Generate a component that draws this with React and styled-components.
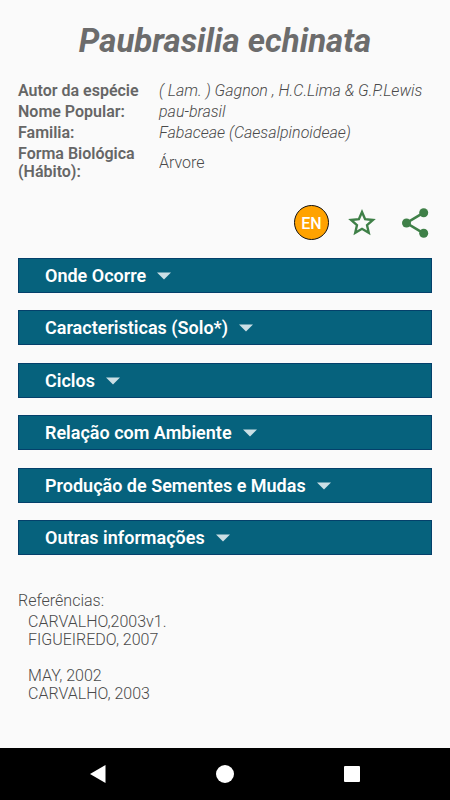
import React, { useState } from 'react';
import styled, { createGlobalStyle } from 'styled-components';

const GlobalStyle = createGlobalStyle`
  * {
    box-sizing: border-box;
  }
  body {
    margin: 0;
    background-color: #fafafa;
    color: #4a4a4a;
    font-family: Roboto, sans-serif;
    font-size: 16px;
    font-weight: 300;
    line-height: 18px;
  }
  button {
    padding: 0;
    border: none;
    background: none;
    font: inherit;
    cursor: pointer;
  }
`;

const Screen = styled.div`
  min-height: 100vh;
  display: flex;
  flex-direction: column;
`;

const Content = styled.main`
  flex: 1;
  padding: 21px 18px;
`;

const Title = styled.h1`
  margin: 0 0 18px;
  color: #6c6c6c;
  font-size: 33px;
  line-height: 40px;
  font-weight: 700;
  font-style: italic;
  text-align: center;
`;

const SpeciesTable = styled.table`
  width: 100%;
  border-collapse: collapse;
  th,
  td {
    padding: 3px 0 0;
    text-align: left;
    vertical-align: middle;
  }
  th {
    width: 141px;
    padding-right: 16px;
    color: #666666;
    font-weight: 600;
  }
`;

const SpeciesValue = styled.td`
  font-style: ${(props) => props.$italic ? 'italic' : 'normal'};
`;

const Actions = styled.div`
  display: flex;
  align-items: center;
  justify-content: flex-end;
  gap: 16px;
  margin: 24px 0 18px;
`;

const LanguageButton = styled.button`
  width: 35px;
  height: 35px;
  && {
    padding-top: 2px;
    border: 1px solid #111111;
    background-color: #ffa200;
    border-radius: 50%;
    color: white;
    font-weight: 500;
  }
`;

const IconButton = styled.button`
  width: 34px;
  height: 34px;
  & + & {
    margin-left: 3px;
  }
  svg {
    display: block;
    stroke: #3f8048;
  }
`;

const Sections = styled.div`
  min-height: 297px;
  display: flex;
  flex-direction: column;
  justify-content: space-between;
`;

const SectionButton = styled.button`
  width: 100%;
  height: 35px;
  display: flex;
  align-items: center;
  gap: 11px;
  && {
    padding: 1px 26px 0;
    border: 1px solid #04406b;
    background-color: #06627d;
    color: white;
    font-size: 18px;
    font-weight: 600;
  }
`;

const Caret = styled.svg`
  width: 14px;
  height: 8px;
  fill: #cbdfe5;
  transform: rotate(${(props) => props.$open ? '180deg' : '0'});
`;

const References = styled.section`
  margin-top: 37px;
  h2 {
    margin: 0 0 3px;
    font-size: 16px;
    font-weight: 300;
  }
  p {
    margin: 0 0 18px 10px;
  }
`;

const NavBar = styled.nav`
  height: 52px;
  padding: 0 35px;
  display: grid;
  grid-template-columns: repeat(3, 1fr);
  align-items: center;
  justify-items: center;
  background-color: black;
`;

const NavButton = styled.button`
  width: 18px;
  height: 18px;
  svg {
    display: block;
    fill: white;
  }
`;

const species = [
  { label: 'Autor da espécie', value: '( Lam. ) Gagnon , H.C.Lima & G.P.Lewis', italic: true },
  { label: 'Nome Popular:', value: 'pau-brasil', italic: true },
  { label: 'Familia:', value: 'Fabaceae (Caesalpinoideae)', italic: true },
  { label: 'Forma Biológica (Hábito):', value: 'Árvore', italic: false },
];

const sections = [
  'Onde Ocorre',
  'Caracteristicas (Solo*)',
  'Ciclos',
  'Relação com Ambiente',
  'Produção de Sementes e Mudas',
  'Outras informações',
];

const StarIcon = ({ filled }) => (
  <svg width="34" height="34" viewBox="0 0 34 34" fill={filled ? '#3f8048' : 'none'} strokeWidth="2.4">
    <path d="M17 6L20.120 13.210L27.940 13.950L22.040 19.140L23.760 26.800L17 22.800L10.240 26.800L11.960 19.140L6.060 13.950L13.880 13.210Z" />
  </svg>
);

const ShareIcon = () => (
  <svg width="34" height="34" viewBox="0 0 34 34" fill="#3f8048" strokeWidth="2.6">
    <path d="M25.700 6.700L8.500 17L25.700 27.300" fill="none" />
    <circle cx="8.500" cy="17" r="4.500" stroke="none" />
    <circle cx="25.700" cy="6.700" r="4.500" stroke="none" />
    <circle cx="25.700" cy="27.300" r="4.500" stroke="none" />
  </svg>
);

const Section = ({ title }) => {
  const [open, setOpen] = useState(false);

  return (
    <SectionButton type="button" aria-expanded={open} onClick={() => setOpen(!open)}>
      {title}
      <Caret viewBox="0 0 14 8" $open={open} aria-hidden="true">
        <path d="M0 0.500h14L7 7.500z" />
      </Caret>
    </SectionButton>
  );
};

const App = () => {
  const [favorite, setFavorite] = useState(false);

  return (
    <Screen>
      <GlobalStyle />
      <Content>
        <Title>Paubrasilia echinata</Title>
        <SpeciesTable>
          <tbody>
            {species.map(({ label, value, italic }) => (
              <tr key={label}>
                <th scope="row">{label}</th>
                <SpeciesValue $italic={italic}>{value}</SpeciesValue>
              </tr>
            ))}
          </tbody>
        </SpeciesTable>
        <Actions>
          <LanguageButton type="button">EN</LanguageButton>
          <IconButton type="button" aria-label="Favorito" onClick={() => setFavorite(!favorite)}>
            <StarIcon filled={favorite} />
          </IconButton>
          <IconButton type="button" aria-label="Compartilhar">
            <ShareIcon />
          </IconButton>
        </Actions>
        <Sections>
          {sections.map((title) => <Section key={title} title={title} />)}
        </Sections>
        <References>
          <h2>Referências:</h2>
          <p>
            CARVALHO,2003v1.
            <br />
            FIGUEIREDO, 2007
          </p>
          <p>
            MAY, 2002
            <br />
            CARVALHO, 2003
          </p>
        </References>
      </Content>
      <NavBar>
        <NavButton type="button" aria-label="Voltar">
          <svg width="18" height="18" viewBox="0 0 18 18"><path d="M16.500 0v18L1 9z" /></svg>
        </NavButton>
        <NavButton type="button" aria-label="Início">
          <svg width="18" height="18" viewBox="0 0 18 18"><circle cx="9" cy="9" r="9" /></svg>
        </NavButton>
        <NavButton type="button" aria-label="Recentes">
          <svg width="18" height="18" viewBox="0 0 18 18"><rect x="1" y="1" width="16" height="16" rx="1" /></svg>
        </NavButton>
      </NavBar>
    </Screen>
  );
};

export default App;
